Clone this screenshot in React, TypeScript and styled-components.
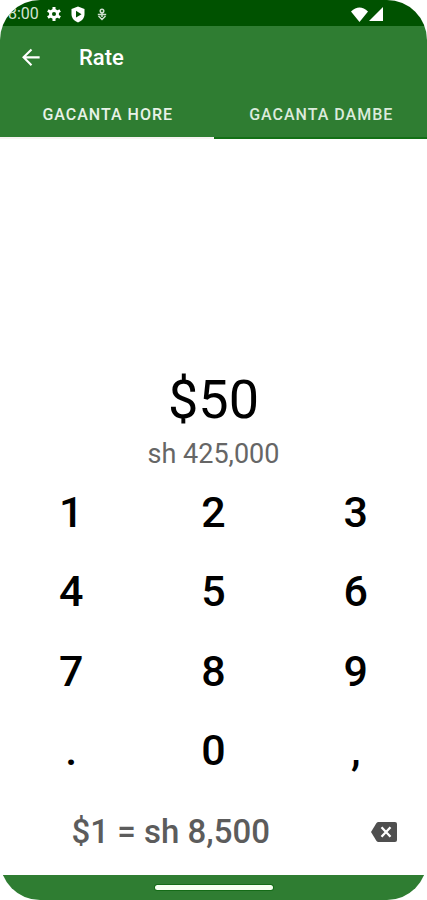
import React, { useState } from "react";
import styled, { createGlobalStyle } from "styled-components";

const GlobalStyle = createGlobalStyle`
  * { box-sizing: border-box; }
  body { margin: 0; background: #fff; }
  button { border: 0; padding: 0; background: none; font: inherit; color: inherit; cursor: pointer; }
  svg { display: block; }
`;

const Screen = styled.div`
  display: flex;
  flex-direction: column;
  min-height: 100vh;
  overflow: hidden;
  border-radius: 40px;
  background: #fff;
  font-family: Roboto, "Liberation Sans", sans-serif;
`;

const StatusBar = styled.div`
  display: flex;
  align-items: center;
  justify-content: space-between;
  height: 26px;
  padding: 2px 44px 0 8px;
  background: #005200;
  color: #fff;
`;

const StatusGroup = styled.div<{ $gap: number }>`
  display: flex;
  align-items: center;
  gap: ${(p) => p.$gap}px;
`;

const Clock = styled.span`
  font-size: 16px;
  line-height: 24px;
  color: #d5e3d5;
`;

const Toolbar = styled.header`
  display: flex;
  align-items: center;
  gap: 36px;
  height: 64px;
  padding: 0 20px;
  background: #2f7d32;
  color: #fff;
`;

const Title = styled.h1`
  margin: 0;
  font-size: 22px;
  font-weight: 500;
  line-height: 28px;
`;

const Tabs = styled.div`
  display: grid;
  grid-template-columns: 1fr 1fr;
  background: #2f7d32;
`;

const Tab = styled.button<{ $active: boolean }>`
  height: 49px;
  padding: 2px 0 0 2px;
  border-bottom: 2px solid ${(p) => (p.$active ? "#f7f2f2" : "#137016")};
  && {
    font-size: 16px;
    font-weight: 500;
    letter-spacing: 1px;
  }
  color: ${(p) => (p.$active ? "#e8f2e8" : "#dcebdc")};
`;

const Display = styled.main`
  display: flex;
  flex: 1;
  flex-direction: column;
  align-items: center;
  justify-content: flex-end;
  padding-bottom: 2px;
`;

const Amount = styled.output`
  font-size: 54px;
  font-weight: 400;
  line-height: 64px;
  color: #000;
`;

const Converted = styled.output`
  margin-top: 6px;
  font-size: 27px;
  font-weight: 400;
  line-height: 32px;
  color: #666;
`;

const Keypad = styled.div`
  display: grid;
  grid-template-columns: repeat(3, 1fr);
  grid-auto-rows: 1fr;
  height: 318px;
`;

const Key = styled.button`
  && {
    font-size: 43px;
    font-weight: 500;
  }
  color: #000;
`;

const RateRow = styled.div`
  display: grid;
  grid-template-columns: 4fr 1fr;
  align-items: center;
  justify-items: center;
  height: 85px;
  padding-bottom: 2px;
`;

const RateText = styled.span`
  font-size: 33px;
  font-weight: 500;
  line-height: 40px;
  color: #5c5c5c;
`;

const IconButton = styled.button`
  color: #4f4f4f;
`;

const NavBar = styled.div`
  display: flex;
  align-items: center;
  justify-content: center;
  height: 25px;
  background: #2f7d32;
`;

const HomeHandle = styled.div`
  width: 118px;
  height: 5px;
  border-radius: 3px;
  background: #f6fff2;
  box-shadow: 0 0 0 1px #146b17;
`;

const GearIcon = () => (
  <svg width="16" height="16" viewBox="0 0 18 18" aria-hidden="true">
    <path
      d="M9 1v16M2.100 5l13.800 8M15.900 5 2.100 13"
      stroke="currentColor"
      strokeWidth="3.400"
    />
    <circle cx="9" cy="9" r="5.600" fill="currentColor" />
    <circle cx="9" cy="9" r="2.300" fill="#005200" />
  </svg>
);

const ShieldIcon = () => (
  <svg width="14" height="17" viewBox="0 0 14 17" aria-hidden="true">
    <path d="M7 .5 13.500 3v5c0 4-2.600 7-6.500 8.500C3.100 15 .5 12 .5 8V3z" fill="currentColor" />
    <path d="M5 4.800 10.500 8.200 5 11.600z" fill="#005200" />
  </svg>
);

const DebugIcon = () => (
  <svg width="10" height="13" viewBox="0 0 10 13" fill="none" stroke="#d0dfd0" aria-hidden="true">
    <circle cx="5" cy="3" r="1.800" strokeWidth="1.500" />
    <path d="M.8 6.500h8.400M5 5v4M1.500 8 5 11.500 8.500 8" strokeWidth="1.500" />
  </svg>
);

const WifiIcon = () => (
  <svg width="17" height="15" viewBox="0 0 17 15" fill="currentColor" aria-hidden="true">
    <path d="M0 4.500Q8.500-3.500 17 4.500L8.500 15z" />
  </svg>
);

const SignalIcon = () => (
  <svg width="14" height="14" viewBox="0 0 14 14" fill="currentColor" aria-hidden="true">
    <path d="M14 0v14H0z" />
  </svg>
);

const BackIcon = () => (
  <svg width="23" height="23" viewBox="0 0 24 24" fill="none" stroke="currentColor" strokeWidth="2.200" aria-hidden="true">
    <path d="M20.500 10.800H4M12 2.500 3.700 10.800l8.300 8.300" />
  </svg>
);

const BackspaceIcon = () => (
  <svg width="26" height="20" viewBox="0 0 26 20" aria-hidden="true">
    <path d="M7.500 0H24q2 0 2 2v16q0 2-2 2H7.500q-1.200 0-2-1L0 10l5.500-9q.8-1 2-1z" fill="currentColor" />
    <path d="m10.500 5.200 9 9.600m0-9.600-9 9.600" stroke="#fff" strokeWidth="2.300" />
  </svg>
);

const TABS = ["GACANTA HORE", "GACANTA DAMBE"];
const KEYS = ["1", "2", "3", "4", "5", "6", "7", "8", "9", ".", "0", ","];
const RATE = 8500;

export default function App() {
  const [tab, setTab] = useState(0);
  const [amount, setAmount] = useState("50");

  const press = (key: string) => setAmount((value) => value + key);
  const erase = () => setAmount((value) => value.slice(0, -1));
  const total = (parseFloat(amount.replace(/,/g, "")) || 0) * RATE;

  return (
    <>
      <GlobalStyle />
      <Screen>
        <StatusBar>
          <StatusGroup $gap={7}>
            <Clock>8:00</Clock>
            <StatusGroup $gap={9}>
              <GearIcon />
              <StatusGroup $gap={12}>
                <ShieldIcon />
                <DebugIcon />
              </StatusGroup>
            </StatusGroup>
          </StatusGroup>
          <StatusGroup $gap={1}>
            <WifiIcon />
            <SignalIcon />
          </StatusGroup>
        </StatusBar>
        <Toolbar>
          <button type="button" aria-label="Back">
            <BackIcon />
          </button>
          <Title>Rate</Title>
        </Toolbar>
        <Tabs role="tablist">
          {TABS.map((label, index) => (
            <Tab
              key={label}
              type="button"
              role="tab"
              aria-selected={tab === index}
              $active={tab === index}
              onClick={() => setTab(index)}
            >
              {label}
            </Tab>
          ))}
        </Tabs>
        <Display>
          <Amount>${amount}</Amount>
          <Converted>sh {total.toLocaleString("en-US")}</Converted>
        </Display>
        <Keypad>
          {KEYS.map((key) => (
            <Key key={key} type="button" onClick={() => press(key)}>
              {key}
            </Key>
          ))}
        </Keypad>
        <RateRow>
          <RateText>$1 = sh 8,500</RateText>
          <IconButton type="button" aria-label="Delete" onClick={erase}>
            <BackspaceIcon />
          </IconButton>
        </RateRow>
        <NavBar>
          <HomeHandle />
        </NavBar>
      </Screen>
    </>
  );
}
